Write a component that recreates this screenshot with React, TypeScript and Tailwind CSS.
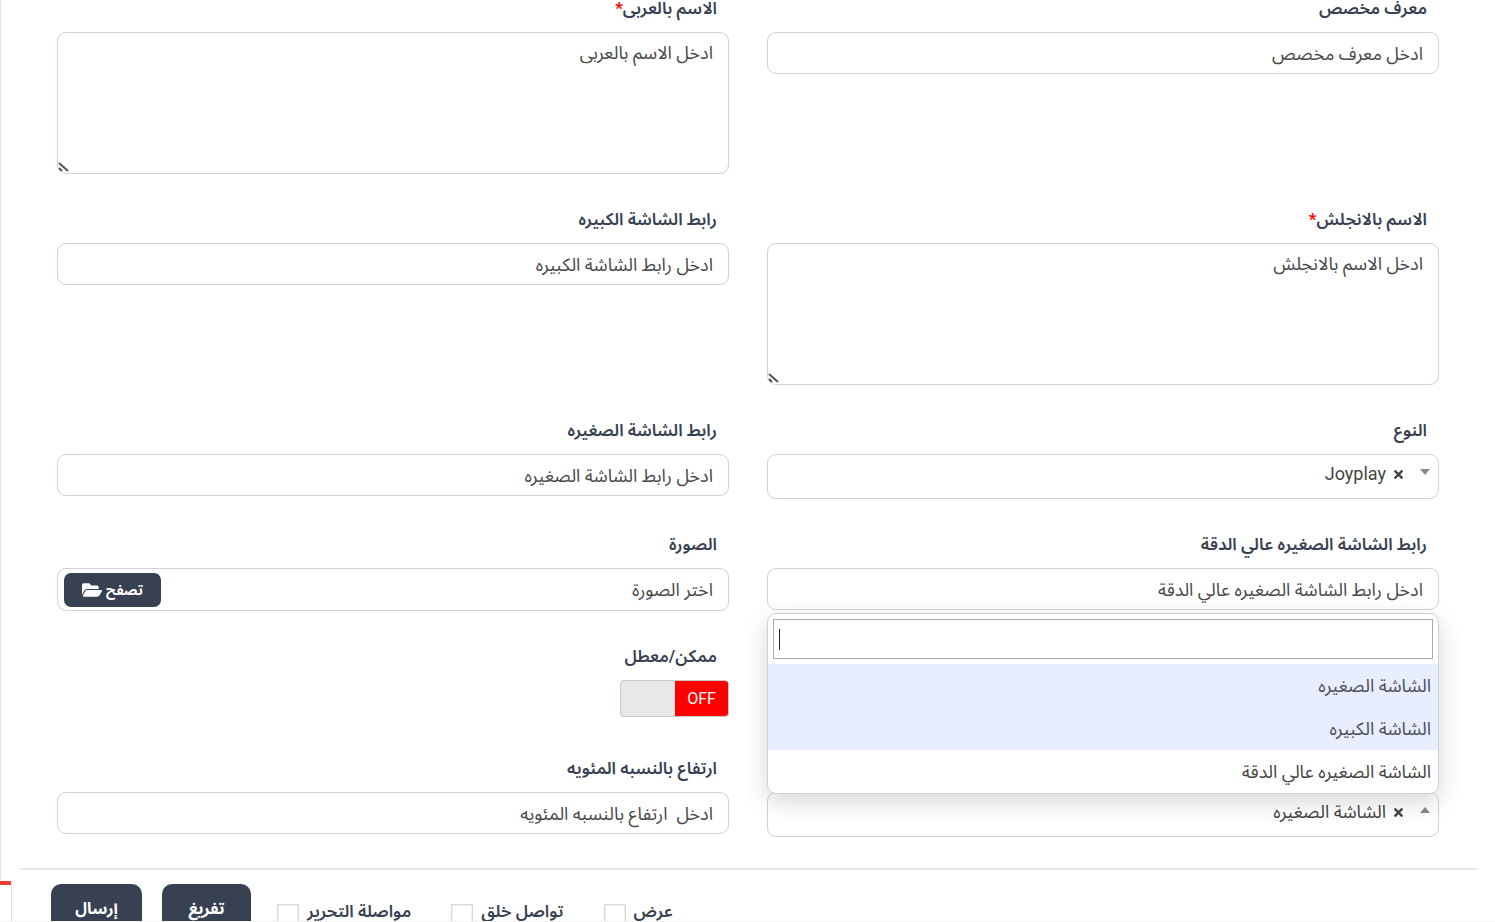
import React, { useState } from "react";
import { FaFolderOpen, FaTimes } from "react-icons/fa";

const controlClass =
  "block w-full rounded-[9px] border border-[#cfd1de] bg-white px-[15px] text-lg text-[#484848] placeholder:text-[#484848] placeholder:opacity-100 outline-none";

interface FieldProps {
  id: string;
  label: string;
  required?: boolean;
  children: React.ReactNode;
}

function Field({ id, label, required, children }: FieldProps) {
  return (
    <div className="min-w-0">
      <label htmlFor={id} className="block mb-4 px-3 text-[17px] leading-4 font-semibold text-[#384152] whitespace-nowrap">
        {label}
        {required && <span className="font-bold text-[#ff0000]">*</span>}
      </label>
      {children}
    </div>
  );
}

interface TextFieldProps {
  id: string;
  label: string;
  placeholder: string;
}

function TextField({ id, label, placeholder }: TextFieldProps) {
  return (
    <Field id={id} label={label}>
      <input id={id} type="text" placeholder={placeholder} className={`${controlClass} h-[42px]`} />
    </Field>
  );
}

function TextAreaField({ id, label, placeholder }: TextFieldProps) {
  return (
    <Field id={id} label={label} required>
      <div className="relative">
        <textarea
          id={id}
          placeholder={placeholder}
          className={`${controlClass} h-[142px] py-2 leading-6 resize [&::-webkit-resizer]:hidden`}
        />
        {/* resize grip */}
        <svg viewBox="0 0 12 12" className="pointer-events-none absolute bottom-0 left-0 h-3 w-3" aria-hidden="true">
          <path d="M2 1l9 8M2 6l3 3" stroke="#555" strokeWidth="2" fill="none" />
        </svg>
      </div>
    </Field>
  );
}

function SelectBox({ id, options, open }: { id: string; options: string[]; open?: boolean }) {
  return (
    <div className="flex h-[45px] items-start rounded-[9px] border border-[#cfd1de] bg-white pr-2 pt-[5px]">
      <svg viewBox="0 0 10 6" className={`mt-[9px] h-[6px] w-[10px] ${open ? "rotate-180" : ""}`} aria-hidden="true">
        <path d="M0 0h10L5 6z" fill="#888" />
      </svg>
      <button type="button" aria-label="مسح" className="mr-4 mt-2 h-[13px] w-[11px] text-[#444]">
        <FaTimes className="h-[13px] w-[11px]" />
      </button>
      <select
        id={id}
        aria-label={open ? "الشاشة" : undefined}
        className="mr-[7px] h-7 min-w-0 flex-1 appearance-none bg-transparent text-lg leading-7 text-[#444] outline-none"
      >
        {options.map((option) => (
          <option key={option}>{option}</option>
        ))}
      </select>
    </div>
  );
}

const screenOptions = [
  { label: "الشاشة الصغيره", active: true },
  { label: "الشاشة الكبيره", active: true },
  { label: "الشاشة الصغيره عالي الدقة", active: false },
];

function ScreenDropdown() {
  return (
    <div className="absolute inset-x-0 bottom-[43px] z-10 overflow-hidden rounded-[9px] border border-[#cfd1d8] bg-white shadow-[0_8px_24px_rgba(0,0,0,0.16)]">
      <div className="relative p-[5px]">
        <input
          type="search"
          aria-label="بحث"
          dir="ltr"
          autoFocus
          className="block h-[40px] w-full appearance-none border border-[#aaa] bg-white px-[5px] text-base text-[#333] caret-transparent outline-none"
        />
        <span className="absolute left-[11px] top-[15px] h-[21px] w-px bg-[#222]" />
      </div>
      <ul role="listbox">
        {screenOptions.map((option) => (
          <li
            key={option.label}
            role="option"
            aria-selected={option.active}
            className={`h-[43px] px-[7px] text-lg leading-[43px] ${
              option.active ? "bg-[#e8eefd] text-[#4a4e5c]" : "text-[#444]"
            }`}
          >
            {option.label}
          </li>
        ))}
      </ul>
    </div>
  );
}

function StatusSwitch() {
  const [enabled, setEnabled] = useState(false);

  return (
    <button
      id="status"
      type="button"
      role="switch"
      aria-checked={enabled}
      onClick={() => setEnabled(!enabled)}
      className="flex h-[37px] w-[109px] overflow-hidden rounded-[4px] border border-[#c8c8c8] bg-[#e7e8ea]"
    >
      <span className="flex h-full w-[53px] items-center justify-center bg-[#ff0000] text-base text-white">
        {enabled ? "ON" : "OFF"}
      </span>
    </button>
  );
}

const footerChecks = [
  { id: "show", label: "عرض" },
  { id: "keep-creating", label: "تواصل خلق" },
  { id: "keep-editing", label: "مواصلة التحرير" },
];

export default function App() {
  return (
    <div
      dir="rtl"
      className="flex h-screen overflow-hidden border-b border-[#f3f3f3] bg-white font-['Roboto','Noto_Sans_Arabic','DejaVu_Sans',sans-serif]"
    >
      <main className="min-w-0 flex-1 pl-2 pr-[18px]">
        <form>
          <div className="grid grid-cols-2 gap-x-[38px] gap-y-[37px] pb-[31px] pl-[37px] pr-[38px]">
            <TextField id="custom-id" label="معرف مخصص" placeholder="ادخل معرف مخصص" />
            <TextAreaField id="name-ar" label="الاسم بالعربى" placeholder="ادخل الاسم بالعربى" />

            <TextAreaField id="name-en" label="الاسم بالانجلش" placeholder="ادخل الاسم بالانجلش" />
            <TextField id="large-url" label="رابط الشاشة الكبيره" placeholder="ادخل رابط الشاشة الكبيره" />

            <Field id="type" label="النوع">
              <SelectBox id="type" options={["Joyplay"]} />
            </Field>
            <TextField id="small-url" label="رابط الشاشة الصغيره" placeholder="ادخل رابط الشاشة الصغيره" />

            <TextField
              id="small-hd-url"
              label="رابط الشاشة الصغيره عالي الدقة"
              placeholder="ادخل رابط الشاشة الصغيره عالي الدقة"
            />
            <Field id="image" label="الصورة">
              <div className="flex h-[43px] items-center rounded-[9px] border border-[#cfd1de] bg-white pl-[6px] pr-[15px]">
                <input
                  id="image"
                  type="text"
                  readOnly
                  placeholder="اختر الصورة"
                  className="h-full min-w-0 flex-1 text-lg text-[#484848] outline-none placeholder:text-[#484848] placeholder:opacity-100"
                />
                <button
                  type="button"
                  className="flex h-[34px] w-[97px] items-center justify-center gap-1 rounded-[7px] bg-[#384152] text-sm font-bold text-white"
                >
                  تصفح
                  <FaFolderOpen className="h-[18px] w-[20px]" />
                </button>
              </div>
            </Field>

            <div className="h-[75px]" />
            <Field id="status" label="ممكن/معطل">
              <StatusSwitch />
            </Field>

            <div className="relative mt-8">
              <ScreenDropdown />
              <SelectBox id="screen" options={["الشاشة الصغيره"]} open />
            </div>
            <TextField id="height" label="ارتفاع بالنسبه المئويه" placeholder="ادخل  ارتفاع بالنسبه المئويه" />
          </div>

          <div className="flex items-start justify-end border-t-2 border-[#e8e8e8] pl-[31px] pt-[14px]">
            <div className="flex items-center gap-10 pt-4 pl-[26px]">
              {footerChecks.map((check) => (
                <div key={check.id} className="flex h-6 items-center gap-2">
                  <label htmlFor={check.id} className="text-[17px] font-semibold text-[#384152] whitespace-nowrap">
                    {check.label}
                  </label>
                  <input
                    id={check.id}
                    type="checkbox"
                    className="mt-[6px] h-[22px] w-[22px] appearance-none border border-[#d8d8d8] bg-white shadow-[inset_0_0_0_1px_#f0f0f0]"
                  />
                </div>
              ))}
            </div>
            <div className="flex gap-5">
              <button type="reset" className="h-[50px] w-[89px] rounded-[10px] bg-[#384152] text-base font-bold text-white">
                تفريغ
              </button>
              <button type="submit" className="h-[50px] w-[91px] rounded-[10px] bg-[#384152] text-base font-bold text-white">
                إرسال
              </button>
            </div>
          </div>
        </form>
      </main>
      <aside className="flex w-3 flex-col">
        <div className="flex-1 border-l border-[#e2e2e8]" />
        <div className="mr-px h-[4px] bg-[#f04030]" />
        <div className="h-9 border-r border-[#ddd]" />
      </aside>
    </div>
  );
}
